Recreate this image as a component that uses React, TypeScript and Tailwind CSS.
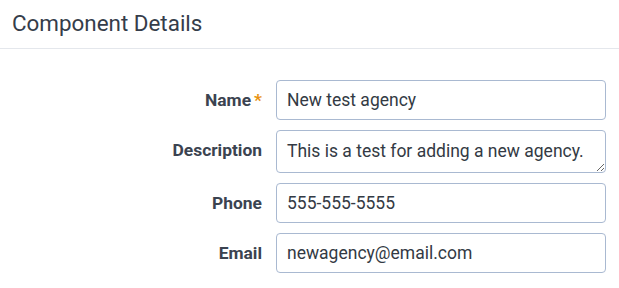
import React from "react";

function Label({ children, required }: { children: React.ReactNode; required?: boolean }) {
  return (
    <div className="w-[262px] shrink-0 pt-[10px] text-right text-[17.4px] leading-[20px] font-bold text-[#3b4350]">
      {children}
      {required && <span className="text-[#e8920f] font-bold ml-[3px]">*</span>}
    </div>
  );
}

const field =
  "w-[330px] border border-[#a9b9d1] rounded-[4px] px-[10px] text-[17.5px] text-[#333a44] outline-none";

export default function App() {
  return (
    <div className="w-[619px] h-[288px] bg-white" style={{ fontFamily: "Roboto, 'Liberation Sans', sans-serif" }}>
      <div className="h-[49px] border-b border-[#e4e7ec] pl-[12px] flex items-center pb-[3px]">
        <h1 className="text-[22.4px] leading-[28px] text-[#353d4a] font-normal">Component Details</h1>
      </div>
      <div className="pt-[31px] flex flex-col gap-[10px]">
        <div className="flex items-start gap-[14px]">
          <Label required>Name</Label>
          <input className={`${field} h-[40px]`} defaultValue="New test agency" />
        </div>
        <div className="flex items-start gap-[14px]">
          <Label>Description</Label>
          <textarea
            className={`${field} h-[43px] py-[8px] leading-[24px] resize-y overflow-hidden`}
            defaultValue="This is a test for adding a new agency."
          />
        </div>
        <div className="flex items-start gap-[14px]">
          <Label>Phone</Label>
          <input className={`${field} h-[40px]`} defaultValue="555-555-5555" />
        </div>
        <div className="flex items-start gap-[14px]">
          <Label>Email</Label>
          <input className={`${field} h-[40px]`} defaultValue="newagency@email.com" />
        </div>
      </div>
    </div>
  );
}
